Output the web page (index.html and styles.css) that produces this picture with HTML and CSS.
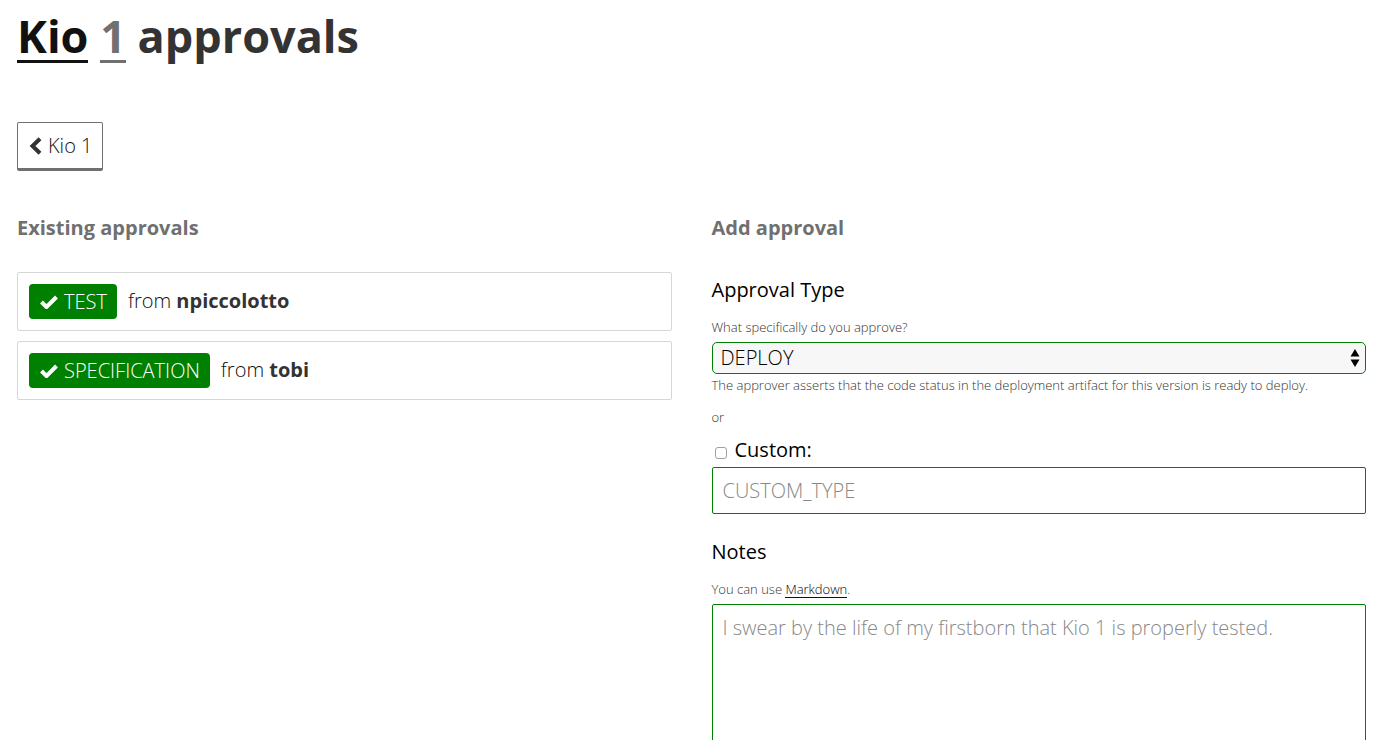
FILE: index.html
```html
<!DOCTYPE html>
<html lang="en">
<head>
<meta charset="utf-8">
<title>Kio 1 approvals</title>
<link rel="stylesheet" href="styles.css">
</head>
<body>
<main class="page">
  <h1 class="title"><a class="app-link" href="#">Kio</a> <a class="version-link" href="#">1</a> approvals</h1>
  <a class="back" href="#"><svg class="chevron" viewBox="0 0 13 18" aria-hidden="true"><path d="M11 1.800 3.500 9l7.500 7.200" /></svg>Kio 1</a>
  <div class="columns">
    <section class="column">
      <h2 class="heading">Existing approvals</h2>
      <ul class="approvals">
        <li class="approval"><span class="badge"><svg class="check" viewBox="0 0 18 14" aria-hidden="true"><path d="M1.500 7 6.500 12 16.500 2" /></svg>TEST</span><span class="source">from <strong class="author">npiccolotto</strong></span></li>
        <li class="approval"><span class="badge"><svg class="check" viewBox="0 0 18 14" aria-hidden="true"><path d="M1.500 7 6.500 12 16.500 2" /></svg>SPECIFICATION</span><span class="source">from <strong class="author">tobi</strong></span></li>
      </ul>
    </section>
    <section class="column">
      <h2 class="heading">Add approval</h2>
      <form class="form">
        <label class="label" for="type">Approval Type</label>
        <p class="hint">What specifically do you approve?</p>
        <div class="select-box">
          <select class="select" id="type"><option>DEPLOY</option></select>
          <svg class="arrows" viewBox="0 0 10 18" aria-hidden="true"><path d="M5 0 9.500 7.500H.5zM5 18 9.500 10.500H.5z" /></svg>
        </div>
        <p class="hint">The approver asserts that the code status in the deployment artifact for this version is ready to deploy.</p>
        <p class="hint or">or</p>
        <div class="custom"><input class="tick" type="checkbox" id="custom"><label class="label" for="custom">Custom:</label></div>
        <input class="text" type="text" placeholder="CUSTOM_TYPE" aria-label="Custom type">
        <label class="label notes-label" for="notes">Notes</label>
        <p class="hint">You can use <a class="hint-link" href="#">Markdown</a>.</p>
        <textarea class="text area" id="notes" placeholder="I swear by the life of my firstborn that Kio 1 is properly tested."></textarea>
      </form>
    </section>
  </div>
</main>
</body>
</html>
```
FILE: styles.css
```css
* { box-sizing: border-box; }
html { overflow: hidden; }
body { margin: 0; background: #fff; color: #111; font: 300 20px/28px "Open Sans", sans-serif; }
a { color: inherit; text-decoration: none; }
.page { padding: 8px 26px 0 17px; }
.title { margin: 0 0 58px; color: #333; font-size: 45px; line-height: 56px; font-weight: 700; }
.app-link, .version-link { display: inline-block; line-height: 48px; border-bottom: 3px solid currentColor; }
.app-link { color: #111; }
.version-link { color: #707070; }
.back { display: inline-flex; align-items: center; gap: 6px; height: 49px; padding: 0 10px 0 11px; border: 1px solid #707070; border-bottom-width: 3px; border-radius: 2px; }
.chevron { width: 13px; height: 18px; fill: none; stroke: #333; stroke-width: 4; }
.columns { display: grid; grid-template-columns: 1fr 1fr; gap: 40px; margin-top: 43px; }
.heading { margin: 0 0 30px; font-size: 20px; line-height: 28px; font-weight: 700; color: #707070; }
.approvals { margin: 0; padding: 0; list-style: none; display: grid; gap: 10px; }
.approval { display: flex; align-items: center; gap: 11px; height: 59px; padding: 0 11px; border: 1px solid #d6d6d6; border-radius: 2px; }
.source { padding-bottom: 2px; }
.author { color: #333; font-weight: 700; }
.badge { display: inline-flex; align-items: center; gap: 6px; height: 35px; padding: 0 10px 0 11px; border-radius: 4px; background: #008000; color: #fff; }
.check { width: 18px; height: 14px; fill: none; stroke: #fff; stroke-width: 4; }
.form { display: flex; flex-direction: column; }
.label { color: #000; font-weight: 400; line-height: 28px; }
.form > .label { margin: 4px 0 13px; }
.hint { margin: 0; font-size: 13px; line-height: 20px; color: #333; }
.select-box { position: relative; margin: 5px 0 1px; }
.select { display: block; width: 100%; height: 32px; padding: 0 8px 2px; appearance: none; border: 1px solid #008000; border-radius: 5px; background: #f7f7f7; color: #000; font: 300 20px "Open Sans", sans-serif; }
.arrows { position: absolute; right: 6px; top: 7px; width: 10px; height: 18px; pointer-events: none; }
.or { margin-top: 12px; }
.custom { display: flex; align-items: center; gap: 8px; margin: 9px 0 3px; }
.tick { width: 12px; height: 12px; margin: 6px 0 0 3px; appearance: none; border: 1px solid #a0a0a0; border-radius: 3px; background: #fff; }
.tick:checked { background: #008000; }
.text { width: 100%; height: 47px; padding: 0 10px; border: 1px solid #008000; border-radius: 2px; background: #fff; font: 300 20px/28px "Open Sans", sans-serif; }
.text::placeholder { color: #888; }
.form > .notes-label { margin: 24px 0 13px; }
.area { height: 160px; margin-top: 5px; padding: 9px 10px; resize: none; }
.hint-link { display: inline-block; line-height: 16px; color: #000; border-bottom: 1px solid #111; }
```
